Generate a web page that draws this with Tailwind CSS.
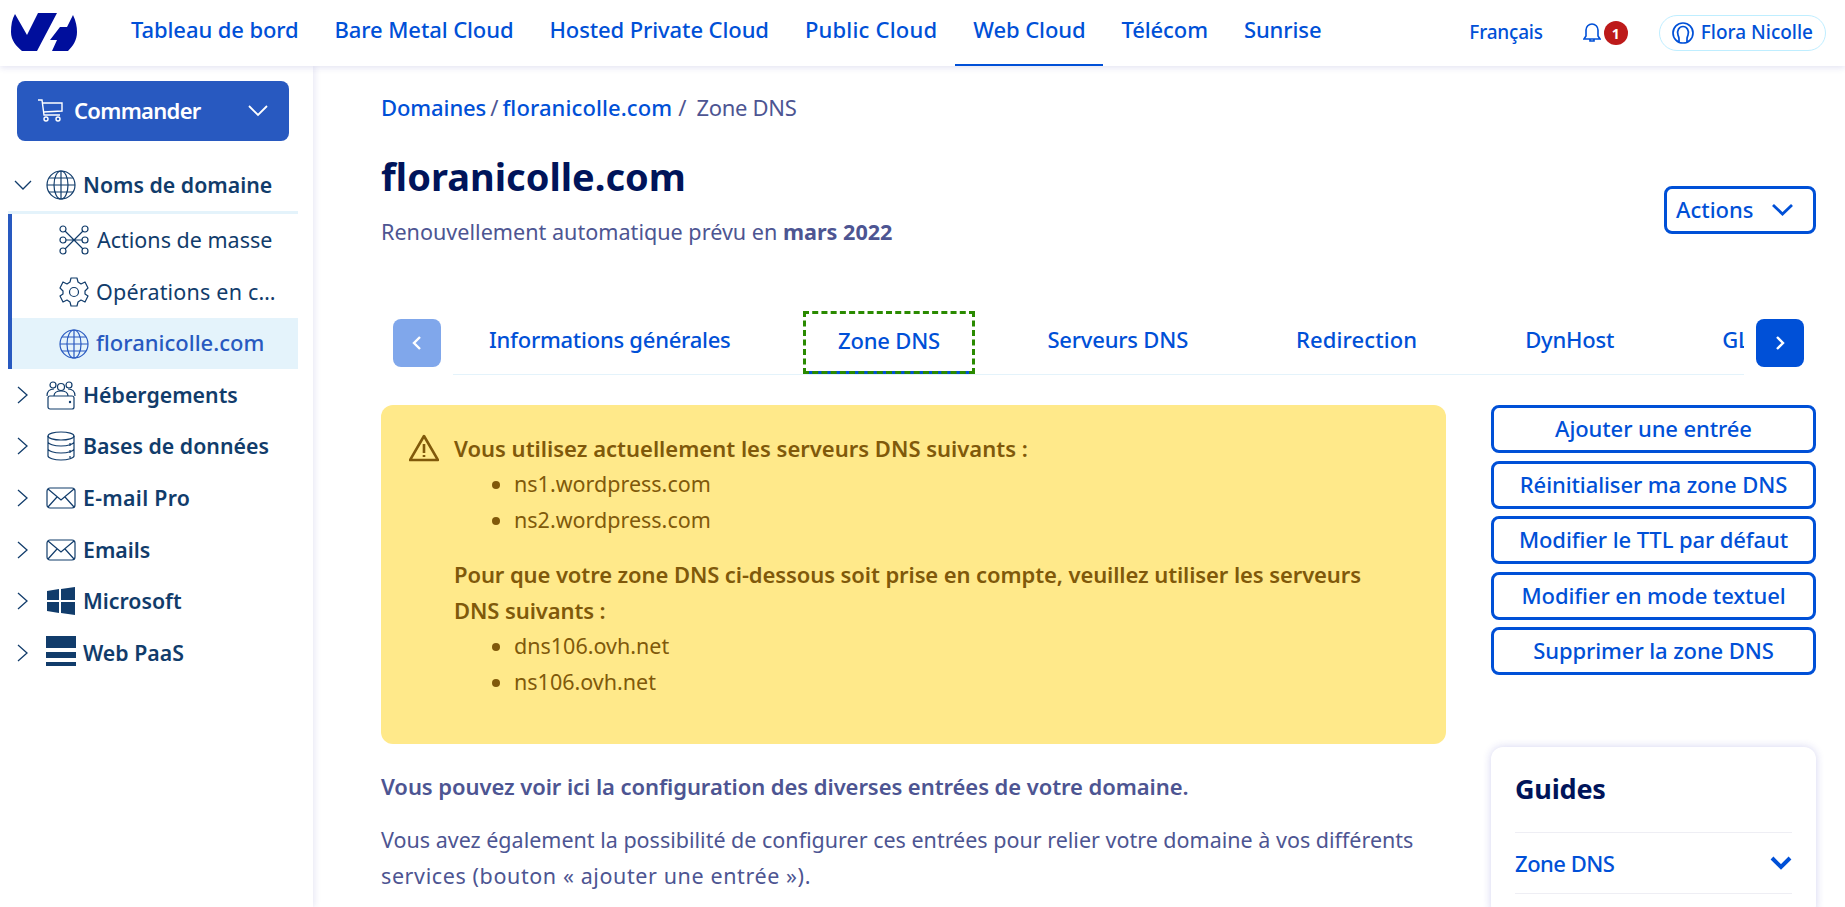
<!DOCTYPE html>
<html lang="fr">
  <head>
    <meta charset="UTF-8" />
    <title>floranicolle.com - Zone DNS</title>
    <script src="https://cdn.jsdelivr.net/npm/@tailwindcss/browser@4"></script>
  </head>
  <body class="h-[907px] overflow-hidden bg-white font-['Noto_Sans',sans-serif] text-[#4d5592]">
    <!-- Barre du haut -->
    <header class="relative z-10 flex h-[66px] items-center bg-white pl-[11px] shadow-[0_2px_6px_rgba(40,40,160,0.12)]">
      <svg class="mb-[2px] h-[38px] w-[66px]" viewBox="0 0 66 38" fill="#000e9c"><path d="M4 1 16 22 27 0H46L26 38H11C5 33 0 27 0 19 0 12 1 6 4 1Z"/><path d="M62 2C65 8 66 14 66 19 66 27 62 33 57 38H41L46 27H39L49 14H56Z"/></svg>
      <nav class="ml-[36px] flex h-full items-center text-[22px] font-medium tracking-[-0.1px] text-[#0050d7]">
        <a class="px-[18px] pb-[8px]">Tableau de bord</a>
        <a class="px-[18px] pb-[8px]">Bare Metal Cloud</a>
        <a class="px-[18px] pb-[8px]">Hosted Private Cloud</a>
        <a class="px-[18px] pb-[8px] tracking-[0.2px]">Public Cloud</a>
        <a class="flex h-full items-center border-b-2 border-[#0050d7] px-[18px] pb-[6px]">Web Cloud</a>
        <a class="px-[18px] pb-[8px]">Télécom</a>
        <a class="px-[18px] pb-[8px]">Sunrise</a>
      </nav>
      <div class="ml-auto mr-[19px] flex items-center text-[19px] font-medium text-[#0050d7]">
        <span class="pb-[2px] tracking-[-0.2px]">Français</span>
        <svg class="ml-[40px] h-[20px] w-[18px]" viewBox="0 0 18 20" fill="none" stroke="#0050d7" stroke-width="1.6"><path d="M1 16H17L15 13V7A6 6 0 0 0 3 7V13ZM7 16V18H11V16"/></svg>
        <span class="ml-[3px] flex h-[24px] w-[24px] items-center justify-center rounded-full bg-[#bd1a1a] text-[14px] font-bold text-white">1</span>
        <span class="ml-[31px] flex h-[36px] items-center gap-[7px] rounded-full border border-[#bfeeff] px-[12px]">
          <svg class="h-[22px] w-[22px]" viewBox="0 0 22 22" fill="none" stroke="#0050d7" stroke-width="1.7"><circle cx="11" cy="11" r="10"/><path d="M7 20V17C7 15 6.500 15 6 13 4.500 9 7 4.500 11 4.500S17.500 9 16 13C15.500 15 15 15 15 17V20"/></svg>
          <span class="pb-[2px]">Flora Nicolle</span>
        </span>
      </div>
    </header>

    <div class="flex h-[841px]">
      <!-- Menu de gauche -->
      <aside class="w-[313px] shrink-0 bg-white shadow-[2px_0_6px_rgba(40,40,160,0.1)]">
        <button class="mx-[17px] mt-[15px] flex h-[60px] w-[272px] items-center rounded-lg bg-[#2859c0] pl-[21px] pr-[21px] text-[22px] font-semibold tracking-[-0.7px] text-white">
          <svg class="mr-[11px] h-[24px] w-[25px]" viewBox="0 0 25 24" fill="none" stroke="#fff" stroke-width="1.4"><path d="M0 1H4L6 16H22M5 4H24V12L5.500 13"/><circle cx="8" cy="20" r="2"/><circle cx="20" cy="20" r="2"/></svg>
          <span class="pb-[2px]">Commander</span>
          <svg class="ml-auto h-[12px] w-[20px]" viewBox="0 0 20 12" fill="none" stroke="#fff" stroke-width="1.8"><path d="M1 1L10 10 19 1"/></svg>
        </button>

        <div class="mt-[18px] text-[21.300px] text-[#113c6b]">
          <div class="ml-[8px] mr-[15px] box-content flex h-[52px] items-center border-b-[3px] border-[#e4f3fb] pl-[6px] font-semibold">
            <svg class="h-[10px] w-[18px]" viewBox="0 0 18 10" fill="none" stroke="#113c6b" stroke-width="1.3"><path d="M1 1L9 9 17 1"/></svg>
            <svg class="ml-[14px] mr-[7px] h-[30px] w-[30px]" viewBox="0 0 30 30" fill="none" stroke="#113c6b" stroke-width="1.2"><circle cx="15" cy="15" r="14"/><ellipse cx="15" cy="15" rx="7" ry="14"/><path d="M15 1V29M1 15H29M3 8H27M3 22H27"/></svg>
            Noms de domaine
          </div>
          <div class="ml-[8px] mr-[15px] border-l-4 border-[#2859c0] text-[21.500px]">
            <div class="flex h-[52px] items-center pl-[47px]">
              <svg class="mr-[8px] h-[30px] w-[30px]" viewBox="0 0 30 30" fill="none" stroke="#113c6b" stroke-width="1.2"><circle cx="4" cy="4" r="3"/><circle cx="26" cy="4" r="3"/><circle cx="4" cy="26" r="3"/><circle cx="26" cy="26" r="3"/><circle cx="4" cy="15" r="3"/><circle cx="26" cy="15" r="3"/><path d="M6 6L15 15 24 24M24 6L15 15 6 24M7 15H23"/></svg>
              Actions de masse
            </div>
            <div class="flex h-[52px] items-center pl-[47px]">
              <svg class="mr-[7px] h-[30px] w-[30px]" viewBox="0 0 30 30" fill="none" stroke="#113c6b" stroke-width="1.2"><circle cx="15" cy="15" r="4.500"/><path d="M12 1H18L19 5 22 7 26 5 29 11 26 14V17L29 19 26 25 22 23 19 25 18 29H12L11 25 8 23 4 25 1 19 4 17V14L1 11 4 5 8 7 11 5Z" stroke-linejoin="round"/></svg>
              <span class="tracking-[0.2px]">Opérations en c…</span>
            </div>
            <div class="flex h-[51px] items-center bg-[#e4f3fb] pl-[47px] text-[22px] font-medium text-[#2859c0]">
              <svg class="mr-[7px] h-[30px] w-[30px]" viewBox="0 0 30 30" fill="none" stroke="#2859c0" stroke-width="1.2"><circle cx="15" cy="15" r="14"/><ellipse cx="15" cy="15" rx="7" ry="14"/><path d="M15 1V29M1 15H29M3 8H27M3 22H27"/></svg>
              <span class="pb-[2px]">floranicolle.com</span>
            </div>
          </div>
          <div class="flex h-[51.600px] items-center pl-[17px] font-semibold">
            <svg class="h-[18px] w-[12px]" viewBox="0 0 12 18" fill="none" stroke="#113c6b" stroke-width="1.3"><path d="M1 1L10 9 1 17"/></svg>
            <svg class="ml-[17px] mr-[7px] h-[30px] w-[30px]" viewBox="0 0 30 30" fill="none" stroke="#113c6b" stroke-width="1.2"><circle cx="7" cy="5" r="3"/><circle cx="15" cy="7" r="3.500"/><circle cx="23" cy="5" r="3"/><path d="M1 16C1 11 4 9 8 9M29 16C29 11 26 9 22 9M8 16C8 12 11 11 15 11S22 12 22 16"/><rect x="2" y="16" width="26" height="13" rx="2"/><circle cx="24" cy="22" r=".6"/></svg>
            Hébergements
          </div>
          <div class="flex h-[51.600px] items-center pl-[17px] font-semibold">
            <svg class="h-[18px] w-[12px]" viewBox="0 0 12 18" fill="none" stroke="#113c6b" stroke-width="1.3"><path d="M1 1L10 9 1 17"/></svg>
            <svg class="ml-[17px] mr-[7px] h-[30px] w-[30px]" viewBox="0 0 30 30" fill="none" stroke="#113c6b" stroke-width="1.2"><ellipse cx="15" cy="5" rx="13" ry="4"/><path d="M2 5V25C2 27 8 29 15 29S28 27 28 25V5M2 11C2 13 8 15 15 15S28 13 28 11M2 18C2 20 8 22 15 22S28 20 28 18M24 12V15M24 19V22M24 25V27"/></svg>
            Bases de données
          </div>
          <div class="flex h-[51.600px] items-center pl-[17px] font-semibold">
            <svg class="h-[18px] w-[12px]" viewBox="0 0 12 18" fill="none" stroke="#113c6b" stroke-width="1.3"><path d="M1 1L10 9 1 17"/></svg>
            <svg class="ml-[17px] mr-[7px] h-[30px] w-[30px]" viewBox="0 0 30 30" fill="none" stroke="#113c6b" stroke-width="1.2"><rect x="1" y="5" width="28" height="20" rx="3"/><path d="M2 6L15 17 28 6M2 24L11 14M28 24L19 14"/></svg>
            <span class="tracking-[0.3px]">E-mail Pro</span>
          </div>
          <div class="flex h-[51.600px] items-center pl-[17px] font-semibold">
            <svg class="h-[18px] w-[12px]" viewBox="0 0 12 18" fill="none" stroke="#113c6b" stroke-width="1.3"><path d="M1 1L10 9 1 17"/></svg>
            <svg class="ml-[17px] mr-[7px] h-[30px] w-[30px]" viewBox="0 0 30 30" fill="none" stroke="#113c6b" stroke-width="1.2"><rect x="1" y="5" width="28" height="20" rx="3"/><path d="M2 6L15 17 28 6M2 24L11 14M28 24L19 14"/></svg>
            Emails
          </div>
          <div class="flex h-[51.600px] items-center pl-[17px] font-semibold">
            <svg class="h-[18px] w-[12px]" viewBox="0 0 12 18" fill="none" stroke="#113c6b" stroke-width="1.3"><path d="M1 1L10 9 1 17"/></svg>
            <svg class="ml-[17px] mr-[7px] h-[30px] w-[30px]" viewBox="0 0 30 30"><path fill="#113c6b" d="M1 5 13 3V14H1ZM15 3 29 1V14H15ZM1 16H13V27L1 25ZM15 16H29V29L15 27Z"/></svg>
            Microsoft
          </div>
          <div class="flex h-[51.600px] items-center pl-[17px] font-semibold">
            <svg class="h-[18px] w-[12px]" viewBox="0 0 12 18" fill="none" stroke="#113c6b" stroke-width="1.3"><path d="M1 1L10 9 1 17"/></svg>
            <svg class="mb-[4px] ml-[17px] mr-[7px] h-[30px] w-[30px]" viewBox="0 0 30 30"><path fill="#113c6b" d="M0 0H30V12H0ZM0 16H30V22H0ZM0 26H30V30H0Z"/></svg>
            Web PaaS
          </div>
        </div>
      </aside>

      <!-- Contenu -->
      <main class="flex-1 overflow-hidden pl-[68px] pr-[29px]">
        <div class="flex h-[84px] items-center pb-[2px] text-[22px]">
          <a class="font-medium tracking-[-0.1px] text-[#0050d7]">Domaines</a><span class="mx-[4px]">/</span>
          <a class="font-medium tracking-[0.1px] text-[#0050d7]">floranicolle.com</a><span class="ml-[6px] mr-[10px]">/</span>
          <span class="tracking-[-0.3px]">Zone DNS</span>
        </div>
        <div class="flex items-start justify-between">
          <div>
            <h1 class="mt-[2px] text-[38px] font-bold leading-[48px] text-[#00145a]">floranicolle.com</h1>
            <p class="mt-[17px] text-[21.600px] leading-[30px]">Renouvellement automatique prévu en <b>mars 2022</b></p>
          </div>
          <button class="mt-[36px] flex h-[48px] w-[152px] items-center rounded-lg border-[3px] border-[#0050d7] pb-[1px] pl-[9px] text-[22px] font-medium text-[#0050d7]">
            Actions
            <svg class="ml-auto mr-[20px] h-[14px] w-[21px]" viewBox="0 0 21 14" fill="none" stroke="#0050d7" stroke-width="2.800"><path d="M1 2L10.500 11 20 2"/></svg>
          </button>
        </div>

        <!-- Onglets -->
        <div class="mt-[64px] h-[65px] px-[12px]">
          <div class="flex h-[63px] items-center">
            <button class="flex h-[48px] w-[48px] shrink-0 items-center justify-center rounded-lg bg-[#80a7eb]">
              <svg class="h-[16px] w-[10px]" viewBox="0 0 10 16" fill="none" stroke="#fff" stroke-width="2.400"><path d="M8 2L2 8 8 14"/></svg>
            </button>
            <div class="ml-[12px] flex h-[64px] flex-1 items-center gap-[36px] overflow-hidden whitespace-nowrap border-b border-[#e4f3fb] text-[22px] font-medium tracking-[-0.2px] text-[#0050d7]">
              <a class="px-[36px] pb-[6px] tracking-[-0.25px]">Informations générales</a>
              <a class="relative flex h-[63px] items-center border-[3px] border-dashed border-[#2a8a00] px-[32.500px] pb-[4px]">Zone DNS<span class="absolute bottom-[-3px] left-[-3px] right-[-3px] -z-10 h-[3px] bg-[#0050d7]"></span></a>
              <a class="px-[36px] pb-[6px]">Serveurs DNS</a>
              <a class="px-[36px] pb-[6px] tracking-[0.1px]">Redirection</a>
              <a class="px-[36px] pb-[6px]">DynHost</a>
              <a class="px-[36px] pb-[6px]">GLUE</a>
            </div>
            <button class="ml-[12px] flex h-[48px] w-[48px] shrink-0 items-center justify-center rounded-lg bg-[#0050d7]">
              <svg class="h-[16px] w-[10px]" viewBox="0 0 10 16" fill="none" stroke="#fff" stroke-width="2.400"><path d="M2 2L8 8 2 14"/></svg>
            </button>
          </div>
        </div>

        <div class="mt-[29px] grid grid-cols-[1065px_325px] gap-[45px]">
          <div>
            <div class="h-[339px] rounded-xl bg-[#ffe98a] px-[28px] pt-[25px] text-[22px] leading-[36px] text-[#80590a]">
              <div class="flex items-center font-semibold">
                <svg class="mr-[15px] h-[28px] w-[30px] shrink-0" viewBox="0 0 30 28" fill="none" stroke="#80590a" stroke-width="2.600" stroke-linejoin="round"><path d="M15 2 29 26H1ZM15 10V19M15 21V23"/></svg>
                Vous utilisez actuellement les serveurs DNS suivants :
              </div>
              <ul class="ml-[81px] list-disc pl-[24px] text-[21.500px]">
                <li>ns1.wordpress.com</li>
                <li>ns2.wordpress.com</li>
              </ul>
              <p class="ml-[45px] mt-[18px] font-semibold tracking-[-0.1px]">Pour que votre zone DNS ci-dessous soit prise en compte, veuillez utiliser les serveurs<br />DNS suivants :</p>
              <ul class="ml-[81px] list-disc pl-[24px] text-[21.500px]">
                <li>dns106.ovh.net</li>
                <li>ns106.ovh.net</li>
              </ul>
            </div>
            <p class="mt-[24px] text-[22px] font-semibold leading-[36px] tracking-[-0.07px]">Vous pouvez voir ici la configuration des diverses entrées de votre domaine.</p>
            <p class="mt-[18px] text-[21.500px] leading-[36px]">Vous avez également la possibilité de configurer ces entrées pour relier votre domaine à vos différents<br /><span class="tracking-[0.6px]">services (bouton « ajouter une entrée »).</span></p>
          </div>
          <div>
            <div class="flex flex-col gap-[7.500px] text-[22px] font-medium tracking-[-0.1px] text-[#0050d7]">
              <button class="h-[48px] rounded-lg border-[3px] border-[#0050d7] pb-[1px]">Ajouter une entrée</button>
              <button class="h-[48px] rounded-lg border-[3px] border-[#0050d7] pb-[1px]">Réinitialiser ma zone DNS</button>
              <button class="h-[48px] rounded-lg border-[3px] border-[#0050d7] pb-[1px]">Modifier le TTL par défaut</button>
              <button class="h-[48px] rounded-lg border-[3px] border-[#0050d7] pb-[1px]">Modifier en mode textuel</button>
              <button class="h-[48px] rounded-lg border-[3px] border-[#0050d7] pb-[1px]">Supprimer la zone DNS</button>
            </div>
            <div class="mt-[72px] h-[170px] rounded-xl bg-white px-[24px] shadow-[0_0_8px_rgba(40,40,180,0.2)]">
              <h2 class="flex h-[85px] items-center text-[27px] font-bold tracking-[-0.2px] text-[#00145a]">Guides</h2>
              <div class="flex h-[62px] items-center justify-between border-y border-[#eeeef4] text-[22px] font-medium tracking-[-0.5px] text-[#0050d7]">
                Zone DNS
                <svg class="h-[14px] w-[22px]" viewBox="0 0 22 14" fill="none" stroke="#0050d7" stroke-width="4"><path d="M2 2L11 11 20 2"/></svg>
              </div>
            </div>
          </div>
        </div>
      </main>
    </div>
  </body>
</html>
